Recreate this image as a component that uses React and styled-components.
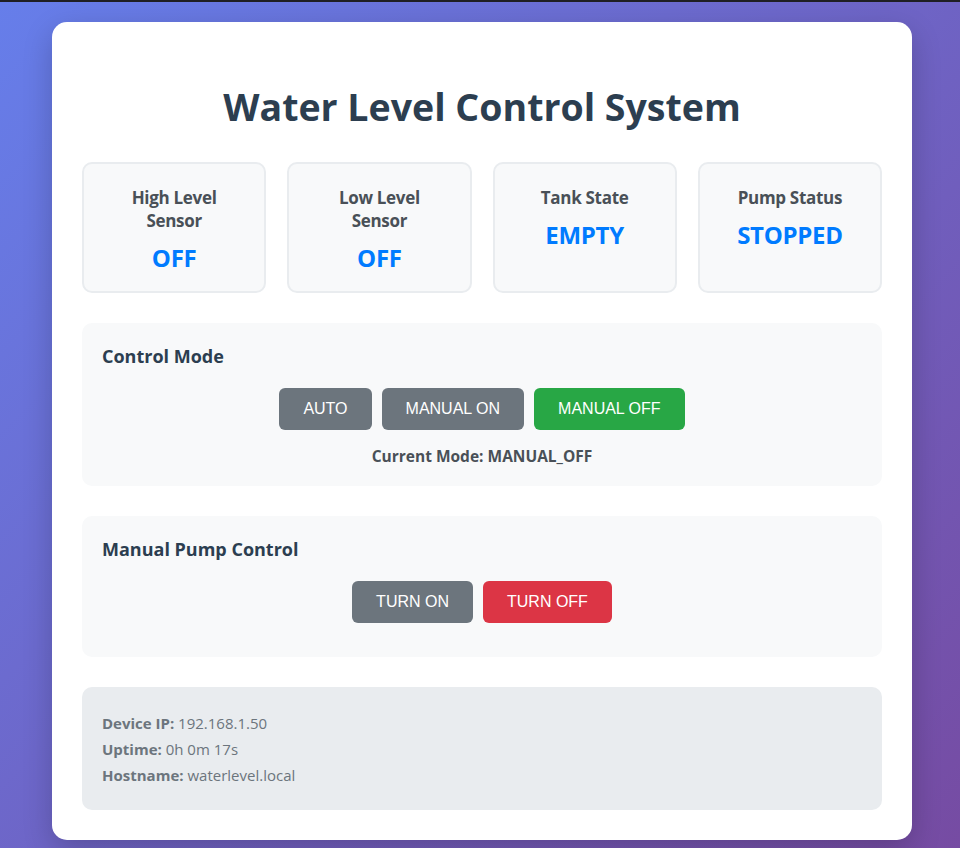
import React from "react";
import styled, { createGlobalStyle } from "styled-components";

const GlobalStyle = createGlobalStyle`
  html {
    border-top: 2px solid #1f1f24;
  }
  body {
    margin: 0;
    font-family: "Open Sans", "Noto Sans", sans-serif;
    background: linear-gradient(135deg, #667eea 0%, #764ba2 100%);
    min-height: 846px;
  }
`;

const Page = styled.div`
  padding: 20px 20px 20px 24px;
`;

const Container = styled.div`
  max-width: 800px;
  margin: 0 auto;
  background: #ffffff;
  border-radius: 15px;
  padding: 30px;
  box-shadow: 0 10px 30px rgba(0, 0, 0, 0.2);
`;

const Title = styled.h1`
  margin: 31px 0 31px;
  text-align: center;
  color: #2c3e50;
  font-size: 37.5px;
  line-height: 48px;
  font-weight: 700;
`;

const StatusGrid = styled.div`
  display: grid;
  grid-template-columns: repeat(4, 1fr);
  gap: 21px;
  margin-bottom: 30px;
`;

const StatusCard = styled.div`
  background: #f8f9fa;
  border: 2px solid #e9ecef;
  border-radius: 10px;
  padding: 22px 16px 18px;
  min-height: 130px;
  box-sizing: border-box;
  text-align: center;
`;

const StatusLabel = styled.div`
  color: #495057;
  font-size: 17px;
  font-weight: 700;
  line-height: 23px;
  padding: 0 14px;
  letter-spacing: -0.3px;
`;

const StatusValue = styled.div`
  color: #007bff;
  font-size: 24px;
  font-weight: 700;
  line-height: 30px;
  margin-top: 11px;
  letter-spacing: -0.3px;
`;

const Section = styled.div`
  background: #f8f9fa;
  border-radius: 10px;
  padding: 20px;
  margin-bottom: 30px;
`;

const SectionTitle = styled.h3`
  margin: 0 0 15px;
  color: #2c3e50;
  font-size: 18px;
  line-height: 26px;
  font-weight: 700;
`;

const ButtonRow = styled.div`
  display: flex;
  justify-content: center;
  gap: 10px;
  padding: 4px 0;
  margin-bottom: ${(p) => p.$bottom || 0}px;
`;

const colors = {
  gray: "#6c757d",
  green: "#28a745",
  red: "#dc3545",
};

const Button = styled.button`
  background: ${(p) => colors[p.$tone]};
  color: #ffffff;
  border: none;
  border-radius: 6px;
  height: 42px;
  padding: 0 24px;
  font-family: "Liberation Sans", Arial, sans-serif;
  font-size: 16px;
  cursor: pointer;
`;

const CurrentMode = styled.p`
  margin: 12px 0 0;
  text-align: center;
  color: #495057;
  font-size: 15.5px;
  font-weight: 700;
  line-height: 20px;
`;

const InfoBox = styled.div`
  background: #e9ecef;
  border-radius: 10px;
  padding: 23px 20px 22px;
  color: #6c757d;
  font-size: 15px;
  line-height: 26px;
`;

const InfoLine = styled.div`
  b {
    font-weight: 700;
  }
`;

const statuses = [
  { label: "High Level Sensor", value: "OFF" },
  { label: "Low Level Sensor", value: "OFF" },
  { label: "Tank State", value: "EMPTY" },
  { label: "Pump Status", value: "STOPPED" },
];

export default function App() {
  return (
    <>
      <GlobalStyle />
      <Page>
        <Container>
          <Title>Water Level Control System</Title>

          <StatusGrid>
            {statuses.map((s) => (
              <StatusCard key={s.label}>
                <StatusLabel>{s.label}</StatusLabel>
                <StatusValue>{s.value}</StatusValue>
              </StatusCard>
            ))}
          </StatusGrid>

          <Section>
            <SectionTitle>Control Mode</SectionTitle>
            <ButtonRow>
              <Button $tone="gray">AUTO</Button>
              <Button $tone="gray">MANUAL ON</Button>
              <Button $tone="green">MANUAL OFF</Button>
            </ButtonRow>
            <CurrentMode>Current Mode: MANUAL_OFF</CurrentMode>
          </Section>

          <Section>
            <SectionTitle>Manual Pump Control</SectionTitle>
            <ButtonRow $bottom={10}>
              <Button $tone="gray">TURN ON</Button>
              <Button $tone="red">TURN OFF</Button>
            </ButtonRow>
          </Section>

          <InfoBox>
            <InfoLine><b>Device IP:</b> 192.168.1.50</InfoLine>
            <InfoLine><b>Uptime:</b> 0h 0m 17s</InfoLine>
            <InfoLine><b>Hostname:</b> waterlevel.local</InfoLine>
          </InfoBox>
        </Container>
      </Page>
    </>
  );
}
